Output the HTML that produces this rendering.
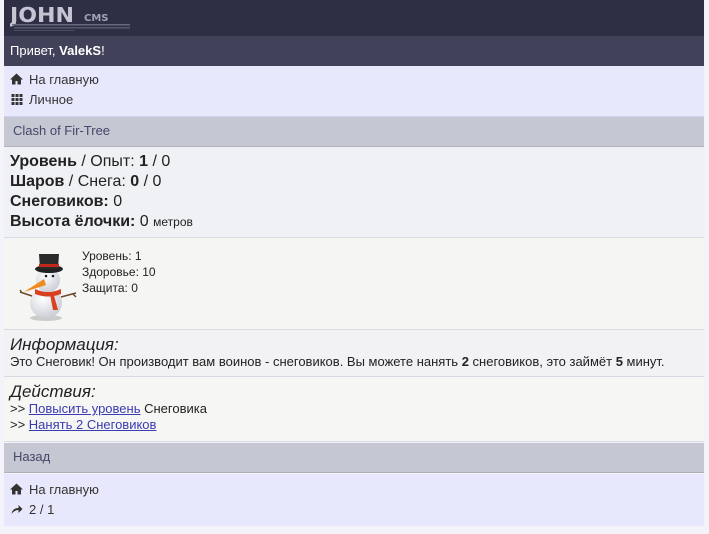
<!DOCTYPE html>
<html><head><meta charset="utf-8"><style>
body{margin:0;background:#f3f3f9;font-family:"Liberation Sans",Arial,sans-serif;font-size:13px;color:#222;width:709px;height:534px;overflow:hidden}
#w{position:absolute;left:4px;width:700px;top:0}
.hd{height:36px;background:#2e2f45;position:relative}
.gr{height:30px;background:#41425a;color:#fff;line-height:30px;padding-left:6px;font-size:13px}
.mn{background:#e8e8fc;border-bottom:1px solid #d2d2ec;padding:4px 6px 6px;height:40px}
.mn div{height:20px;line-height:20px;color:#333}
.ph{background:#c5c8d2;border-bottom:1px solid #aeb0ba;height:29px;line-height:28px;padding-left:9px;color:#45466a}
.st{background:#f0f1f5;border-bottom:1px solid #d8dae2;padding:5px 6px;font-size:16px;line-height:20px;height:80px}
.im{background:#f5f5f3;border-bottom:1px solid #d8dae2;height:91px;position:relative}
.sec{background:#f2f2f5;border-bottom:1px solid #d8dae2;padding:5px 6px;font-size:13px}
.sec i{font-size:17px;display:block;line-height:19px}
a{color:#3b3bb2}
.ic{display:inline-block;width:13px;vertical-align:-1px;margin-right:6px}
</style></head><body><div id="w">
<div class="hd"><svg width="130" height="30" style="position:absolute;left:6px;top:4px"><text x="0" y="18" font-family="DejaVu Sans" font-weight="bold" font-size="20" fill="#c4c4d2" textLength="64" lengthAdjust="spacingAndGlyphs">JOHN</text><text x="74" y="17" font-family="DejaVu Sans" font-weight="bold" font-size="10" fill="#a0a0b6">CMS</text><rect x="2" y="20" width="118" height="1.5" fill="#666a80"/><rect x="4" y="23" width="116" height="1.5" fill="#55586c"/><rect x="4" y="26" width="60" height="1" fill="#4a4d60"/></svg></div>
<div class="gr">Привет, <b>ValekS</b>!</div>
<div class="mn"><div><svg class="ic" width="13" height="12" viewBox="0 0 13 12"><path d="M6.5 0.5L0 6.5h2V11.5h3.5V8h2v3.5H11V6.5h2z" fill="#333"/></svg>На главную</div><div><svg class="ic" width="13" height="12" viewBox="0 0 12 12" fill="#333"><rect x="1" y="1" width="3" height="3"/><rect x="5" y="1" width="3" height="3"/><rect x="9" y="1" width="3" height="3"/><rect x="1" y="5" width="3" height="3"/><rect x="5" y="5" width="3" height="3"/><rect x="9" y="5" width="3" height="3"/><rect x="1" y="9" width="3" height="3"/><rect x="5" y="9" width="3" height="3"/><rect x="9" y="9" width="3" height="3"/></svg>Личное</div></div>
<div class="ph">Clash of Fir-Tree</div>
<div class="st"><b>Уровень</b> / Опыт: <b>1</b> / 0<br><b>Шаров</b> / Снега: <b>0</b> / 0<br><b>Снеговиков:</b> 0<br><b>Высота ёлочки:</b> 0 <span style="font-size:12px">метров</span></div>
<div class="im"><svg width="60" height="75" style="position:absolute;left:14px;top:10px" viewBox="0 0 60 75">
<defs><radialGradient id="g" cx="0.4" cy="0.35" r="0.7"><stop offset="0" stop-color="#fff"/><stop offset="1" stop-color="#c8ccd4"/></radialGradient></defs>
<ellipse cx="28" cy="70" rx="16" ry="3" fill="#ccc"/>
<ellipse cx="28" cy="55" rx="16" ry="15" fill="url(#g)"/>
<circle cx="30" cy="32" r="12" fill="url(#g)"/>
<ellipse cx="31" cy="21" rx="14" ry="4" fill="#222"/>
<path d="M21 6h20l-1 15H22z" fill="#2a2a2a"/>
<rect x="21" y="16" width="20" height="3" fill="#c02818"/>
<path d="M26 31L6 44 28 37z" fill="#f08a1c"/>
<circle cx="28" cy="28" r="1.3" fill="#222"/><circle cx="35" cy="28" r="1.3" fill="#222"/>
<path d="M17 41q13 6 26 0v5q-13 5-26 0z" fill="#d94020"/>
<path d="M35 44l5 18h-5l-3-16z" fill="#d94020"/>
<path d="M43 49l15-4M55 46l3 3M14 48l-12-4M4 45l-2-3" stroke="#6b4a2a" stroke-width="1.5" fill="none"/></svg>
<div style="position:absolute;left:78px;top:10px;font-size:12px;line-height:16px">Уровень: 1<br>Здоровье: 10<br>Защита: 0</div></div>
<div class="sec" style="height:36px"><i>Информация:</i>Это Снеговик! Он производит вам воинов - снеговиков. Вы можете нанять <b>2</b> снеговиков, это займёт <b>5</b> минут.</div>
<div class="sec" style="height:54px;background:#f6f6f4;line-height:16px"><i>Действия:</i>&gt;&gt; <a href="#">Повысить уровень</a> Снеговика<br>&gt;&gt; <a href="#">Нанять 2 Снеговиков</a></div>
<div class="ph" style="margin-top:1px">Назад</div>
<div class="mn" style="margin-top:1px;border:none;height:40px;padding-top:6px"><div><svg class="ic" width="13" height="12" viewBox="0 0 13 12"><path d="M6.5 0.5L0 6.5h2V11.5h3.5V8h2v3.5H11V6.5h2z" fill="#333"/></svg>На главную</div><div><svg class="ic" width="13" height="12" viewBox="0 0 12 12"><path d="M1 11q1-6 7-6V2l4 4-4 4V7q-4 0-7 4z" fill="#333"/></svg>2 / 1</div></div>
</div></body></html>
